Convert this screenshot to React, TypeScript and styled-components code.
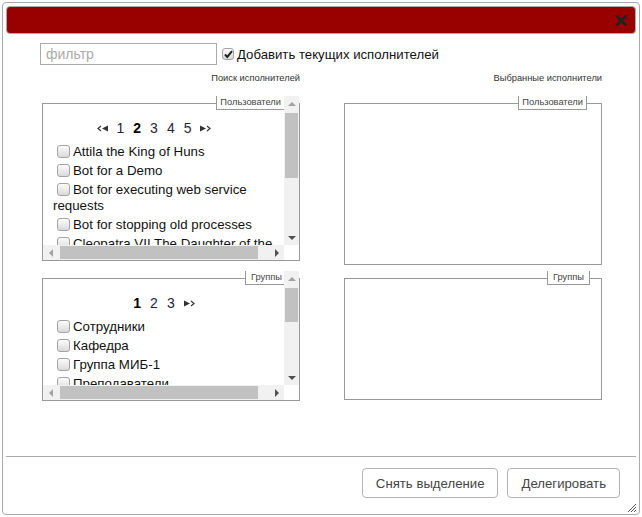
import React from 'react';
import styled, { createGlobalStyle, css } from 'styled-components';

const GlobalStyle = createGlobalStyle`
  html, body { margin: 0; padding: 0; background: #fff; }
  body { font-family: "Liberation Sans", Arial, sans-serif; }
`;

const Dialog = styled.div`
  box-sizing: border-box;
  position: relative;
  width: 638px;
  height: 513px;
  margin: 2px 0 0 2px;
  padding: 3px;
  border: 1px solid #aaa;
  border-radius: 4px;
  background: #fff;
  display: flex;
  flex-direction: column;
`;

const TitleBar = styled.div`
  box-sizing: border-box;
  height: 28px;
  flex: none;
  border: 1px solid #aaa;
  border-radius: 4px;
  background: #990000;
  display: flex;
  align-items: center;
  justify-content: flex-end;
  padding-right: 8px;
`;

const Body = styled.div`
  flex: 1;
  padding: 9px 0 0 34px;
`;

const TopRow = styled.div`
  display: flex;
  align-items: center;
  height: 22px;
`;

const FilterInput = styled.input`
  box-sizing: border-box;
  width: 177px;
  height: 22px;
  margin: 0;
  padding: 0 5px;
  border: 1px solid #aaa;
  border-radius: 0;
  font-family: inherit;
  font-size: 14px;
  color: #333;
  outline: none;
  &::placeholder { color: #aaa; }
`;

const AddLabel = styled.label`
  display: flex;
  align-items: center;
  margin-left: 1px;
  font-size: 13.2px;
  color: #111;
`;

const Columns = styled.div`
  display: flex;
  gap: 44px;
  margin: 7px 0 0 2px;
`;

const Column = styled.div`
  width: 258px;
  display: flex;
  flex-direction: column;
`;

const Caption = styled.div`
  text-align: right;
  font-size: 9.3px;
  line-height: 12px;
  color: #333;
  margin-bottom: 12px;
`;

const Frame = styled.div<{ $h: number; $gap: number }>`
  box-sizing: border-box;
  height: ${({ $h }) => $h}px;
  margin-top: ${({ $gap }) => $gap}px;
  border: 1px solid #999;
  border-top: none;
`;

const Head = styled.div`
  display: flex;
  align-items: flex-start;
  width: 256px;
  height: 14px;
`;

const HeadLine = styled.div<{ $w?: number }>`
  flex: ${({ $w }) => ($w ? 'none' : '1')};
  width: ${({ $w }) => ($w ? `${$w}px` : 'auto')};
  margin-top: 7px;
  border-top: 1px solid #999;
`;

const Legend = styled.div<{ $pad: number }>`
  box-sizing: border-box;
  height: 14px;
  padding: 0 ${({ $pad }) => $pad}px;
  border: 1px solid #999;
  border-top: none;
  background: #fff;
  font-size: 9.3px;
  line-height: 13px;
  color: #444;
  white-space: nowrap;
`;

/* scroll box with a drawn classic scrollbar */
const ScrollGrid = styled.div`
  display: grid;
  grid-template-columns: minmax(0, 1fr) 15px;
  grid-template-rows: minmax(0, 1fr) 15px;
  margin-top: -7px;
  height: calc(100% + 7px);
`;

const Viewport = styled.div`
  overflow: hidden;
`;

const Bar = styled.div<{ $v?: boolean }>`
  display: flex;
  flex-direction: ${({ $v }) => ($v ? 'column' : 'row')};
  background: #f1f1f1;
`;

const BarBtn = styled.div`
  flex: none;
  width: 15px;
  height: 15px;
  display: flex;
  align-items: center;
  justify-content: center;
`;

type Dir = 'up' | 'down' | 'left' | 'right';

const triangle: Record<Dir, ReturnType<typeof css>> = {
  up: css`border-width: 0 4px 4px 4px; border-bottom-color: var(--c);`,
  down: css`border-width: 4px 4px 0 4px; border-top-color: var(--c);`,
  left: css`border-width: 4px 4px 4px 0; border-right-color: var(--c);`,
  right: css`border-width: 4px 0 4px 4px; border-left-color: var(--c);`,
};

const Tri = styled.span<{ $dir: Dir; $off?: boolean }>`
  --c: ${({ $off }) => ($off ? '#a3a3a3' : '#505050')};
  width: 0;
  height: 0;
  border-style: solid;
  border-color: transparent;
  ${({ $dir }) => triangle[$dir]}
`;

const Track = styled.div<{ $v?: boolean }>`
  flex: 1;
  display: flex;
  flex-direction: ${({ $v }) => ($v ? 'column' : 'row')};
  align-items: stretch;
`;

const Thumb = styled.div<{ $v?: boolean; $pos: number; $len: number }>`
  flex: none;
  background: #c1c1c1;
  ${({ $v, $pos, $len }) => ($v
    ? css`margin: ${$pos}px 1px 0; height: ${$len}px;`
    : css`margin: 1px 0 1px ${$pos}px; width: ${$len}px;`)}
`;

const Corner = styled.div`
  background: #fff;
`;

const Inner = styled.div`
  width: 270px;
`;

const Pager = styled.div`
  display: flex;
  justify-content: center;
  align-items: center;
  gap: 9px;
  height: 16px;
  margin: 10px 48px 8px 0;
  font-size: 14px;
`;

const PageNum = styled.span<{ $cur?: boolean }>`
  font-weight: ${({ $cur }) => ($cur ? 'bold' : 'normal')};
  color: ${({ $cur }) => ($cur ? '#000' : '#23233f')};
`;

const Arrow = styled.svg<{ $hidden?: boolean }>`
  visibility: ${({ $hidden }) => ($hidden ? 'hidden' : 'visible')};
`;

const List = styled.div`
  padding: 0 20px 8px 10px;
`;

const Item = styled.div`
  font-size: 13.3px;
  line-height: 16px;
  margin-bottom: 3px;
  color: #111;
`;

const Box = styled.span<{ $size?: number }>`
  box-sizing: border-box;
  display: inline-block;
  position: relative;
  width: ${({ $size }) => $size || 13}px;
  height: ${({ $size }) => $size || 13}px;
  margin: 0 3px 0 4px;
  vertical-align: -2px;
  border: 1px solid #a3a3a3;
  border-radius: 3px;
  background: linear-gradient(#fcfcfc, #dadada);
  svg { position: absolute; left: 0; top: 0; }
`;

const Footer = styled.div`
  box-sizing: border-box;
  flex: none;
  height: 55px;
  border-top: 1px solid #aaa;
  padding: 11px 16px 0 0;
  display: flex;
  justify-content: flex-end;
  align-items: flex-start;
  gap: 9px;
`;

const Button = styled.button`
  height: 30px;
  padding: 0 13px;
  border: 1px solid #b3b3b3;
  border-radius: 4px;
  background: #fff;
  font-family: inherit;
  font-size: 13.2px;
  color: #444;
`;

const Grip = styled.svg`
  position: absolute;
  right: 3px;
  bottom: 2px;
`;

const CloseIcon = () => (
  <svg width="11" height="11" viewBox="0 0 11 11">
    <path d="M1.5 1.5L9.5 9.5M9.5 1.5L1.5 9.5" stroke="#222" strokeWidth="2.8" strokeLinecap="square" />
  </svg>
);

const PrevArrow = ({ hidden }: { hidden?: boolean }) => (
  <Arrow $hidden={hidden} width="11" height="7" viewBox="0 0 11 7">
    <path d="M4 1L1 3.5L4 6" stroke="#333" strokeWidth="1.2" fill="none" />
    <path d="M11 0.5V6.5L5 3.5Z" fill="#333" />
  </Arrow>
);

const NextArrow = () => (
  <svg width="11" height="7" viewBox="0 0 11 7">
    <path d="M0 0.5V6.5L6 3.5Z" fill="#333" />
    <path d="M7 1L10 3.5L7 6" stroke="#333" strokeWidth="1.2" fill="none" />
  </svg>
);

const Check = ({ checked, size }: { checked?: boolean; size?: number }) => (
  <Box $size={size}>
    {checked && (
      <svg width="11" height="11" viewBox="0 0 11 11">
        <path d="M2 5.5L4.3 8L9 2.2" stroke="#222" strokeWidth="2" fill="none" />
      </svg>
    )}
  </Box>
);

type LegendKind = { legend: string; pad: number; trail: number };

const kinds: Record<'users' | 'groups', LegendKind> = {
  users: { legend: 'Пользователи', pad: 3, trail: 14 },
  groups: { legend: 'Группы', pad: 5, trail: 11 },
};

type SectionProps = {
  kind: LegendKind;
  height: number;
  gap: number;
  children?: React.ReactNode;
};

const HeadRow = ({ kind }: { kind: LegendKind }) => (
  <Head>
    <HeadLine />
    <Legend $pad={kind.pad}>{kind.legend}</Legend>
    <HeadLine $w={kind.trail} />
  </Head>
);

const EmptySection = ({ kind, height, gap }: SectionProps) => (
  <Frame $h={height} $gap={gap}>
    <div style={{ marginTop: -7 }}>
      <HeadRow kind={kind} />
    </div>
  </Frame>
);

type ScrollProps = SectionProps & { vThumb: [number, number]; hThumb: [number, number] };

const ScrollSection = ({
  kind, height, gap, children, vThumb, hThumb,
}: ScrollProps) => (
  <Frame $h={height} $gap={gap}>
    <ScrollGrid>
      <Viewport>
        <Inner>
          <HeadRow kind={kind} />
          {children}
        </Inner>
      </Viewport>
      <Bar $v>
        <BarBtn><Tri $dir="up" $off /></BarBtn>
        <Track $v>
          <Thumb $v $pos={vThumb[0]} $len={vThumb[1]} />
        </Track>
        <BarBtn><Tri $dir="down" /></BarBtn>
      </Bar>
      <Bar>
        <BarBtn><Tri $dir="left" $off /></BarBtn>
        <Track>
          <Thumb $pos={hThumb[0]} $len={hThumb[1]} />
        </Track>
        <BarBtn><Tri $dir="right" /></BarBtn>
      </Bar>
      <Corner />
    </ScrollGrid>
  </Frame>
);

const users = [
  'Attila the King of Huns',
  'Bot for a Demo',
  'Bot for executing web service requests',
  'Bot for stopping old processes',
  'Cleopatra VII The Daughter of the Nile',
  'Elizabeth I of England',
  'Genghis Khan',
  'Ivan the Terrible',
  'Julius Caesar',
];

const groups = ['Сотрудники', 'Кафедра', 'Группа МИБ-1', 'Преподаватели', 'Студенты'];

const App = () => (
  <>
    <GlobalStyle />
    <Dialog>
      <TitleBar>
        <CloseIcon />
      </TitleBar>
      <Body>
        <TopRow>
          <FilterInput placeholder="фильтр" />
          <AddLabel>
            <Check checked size={12} />
            Добавить текущих исполнителей
          </AddLabel>
        </TopRow>
        <Columns>
          <Column>
            <Caption>Поиск исполнителей</Caption>
            <ScrollSection kind={kinds.users} height={158} gap={7} vThumb={[2, 65]} hThumb={[2, 198]}>
              <Pager>
                <PrevArrow />
                <PageNum>1</PageNum>
                <PageNum $cur>2</PageNum>
                <PageNum>3</PageNum>
                <PageNum>4</PageNum>
                <PageNum>5</PageNum>
                <NextArrow />
              </Pager>
              <List>
                {users.map((u) => (
                  <Item key={u}>
                    <Check />
                    {u}
                  </Item>
                ))}
              </List>
            </ScrollSection>
            <ScrollSection kind={kinds.groups} height={123} gap={17} vThumb={[2, 34]} hThumb={[2, 198]}>
              <Pager>
                <PrevArrow hidden />
                <PageNum $cur>1</PageNum>
                <PageNum>2</PageNum>
                <PageNum>3</PageNum>
                <NextArrow />
              </Pager>
              <List>
                {groups.map((g) => (
                  <Item key={g}>
                    <Check />
                    {g}
                  </Item>
                ))}
              </List>
            </ScrollSection>
          </Column>
          <Column>
            <Caption>Выбранные исполнители</Caption>
            <EmptySection kind={kinds.users} height={162} gap={7} />
            <EmptySection kind={kinds.groups} height={122} gap={13} />
          </Column>
        </Columns>
      </Body>
      <Footer>
        <Button type="button">Снять выделение</Button>
        <Button type="button">Делегировать</Button>
      </Footer>
      <Grip width="9" height="9" viewBox="0 0 9 9">
        <path d="M1 9L9 1M4 9L9 4M7 9L9 7" stroke="#555" strokeWidth="1" />
      </Grip>
    </Dialog>
  </>
);

export default App;
